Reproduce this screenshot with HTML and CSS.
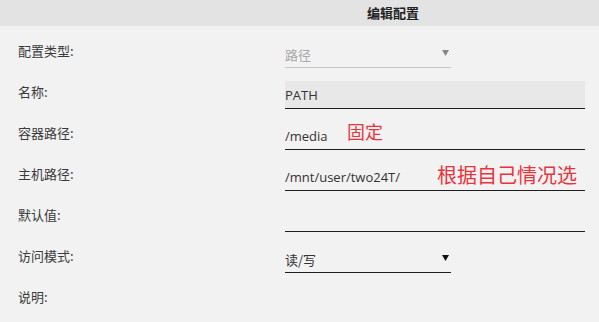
FILE: index.html
```html
<!DOCTYPE html>
<html lang="zh">
<head>
<meta charset="utf-8">
<title>编辑配置</title>
<link rel="stylesheet" href="styles.css">
</head>
<body>
<div class="dialog">
  <div class="header"><span class="title">编辑配置</span></div>
  <div class="form">
    <div class="row">
      <div class="label">配置类型:</div>
      <div class="field select disabled"><span class="value">路径</span><svg class="arrow" width="7" height="6" viewBox="0 0 7 6"><path d="M0 0H7L3.5 6Z"/></svg></div>
    </div>
    <div class="row">
      <div class="label">名称:</div>
      <div class="field text filled"><span class="value">PATH</span></div>
    </div>
    <div class="row">
      <div class="label">容器路径:</div>
      <div class="field text"><span class="value">/media</span><span class="note note-short">固定</span></div>
    </div>
    <div class="row">
      <div class="label">主机路径:</div>
      <div class="field text"><span class="value">/mnt/user/two24T/</span><span class="note note-long">根据自己情况选</span></div>
    </div>
    <div class="row">
      <div class="label">默认值:</div>
      <div class="field text"><span class="value"></span></div>
    </div>
    <div class="row">
      <div class="label">访问模式:</div>
      <div class="field select"><span class="value">读/写</span><svg class="arrow" width="7" height="6" viewBox="0 0 7 6"><path d="M0 0H7L3.5 6Z"/></svg></div>
    </div>
    <div class="row">
      <div class="label">说明:</div>
      <div class="field none"></div>
    </div>
  </div>
</div>
</body>
</html>
```
FILE: styles.css
```css
html, body {
  margin: 0;
  padding: 0;
  background: #f2f2f2;
}
body {
  width: 599px;
  height: 322px;
  overflow: hidden;
  font-family: "Noto Sans CJK SC", "Open Sans", sans-serif;
  color: #333;
}
.dialog {
  display: flex;
  flex-direction: column;
}
.header {
  height: 26px;
  background: #e3e3e3;
  display: flex;
  align-items: center;
  padding-left: 367px;
}
.title {
  font-size: 13px;
  font-weight: bold;
  color: #222;
  line-height: 20px;
}
.form {
  display: flex;
  flex-direction: column;
  padding-top: 14px;
}
.row {
  display: grid;
  grid-template-columns: 267px auto;
  padding-left: 18px;
  height: 41px;
}
.label {
  font-size: 13px;
  line-height: 20px;
  padding-top: 1px;
  color: #3a3a3a;
}
.field {
  position: relative;
  box-sizing: border-box;
  height: 28px;
  display: flex;
  align-items: center;
  border-bottom: 1px solid #1e1e1e;
  font-family: "Open Sans", "Noto Sans CJK SC", sans-serif;
  font-size: 13px;
  color: #333;
  padding-top: 1px;
  white-space: nowrap;
}
.field.text {
  width: 300px;
}
.field.filled {
  background: #e8e8e8;
}
.field.select {
  width: 166px;
  justify-content: space-between;
  padding-right: 1px;
  font-family: "Noto Sans CJK SC", sans-serif;
}
.field.none {
  border-bottom: none;
}
.select.disabled {
  border-bottom-color: #c6c6c6;
  color: #a8a8a8;
}
.arrow {
  fill: #111;
  margin-top: -2px;
  margin-right: 1px;
}
.disabled .arrow {
  fill: #888;
}
.note {
  position: absolute;
  font-family: "Noto Sans CJK SC", sans-serif;
  color: #e8343e;
  white-space: nowrap;
}
.note-short {
  left: 62px;
  top: 0;
  font-size: 18px;
  line-height: 18px;
}
.note-long {
  left: 152px;
  top: 2px;
  font-size: 20px;
  line-height: 20px;
}
```
